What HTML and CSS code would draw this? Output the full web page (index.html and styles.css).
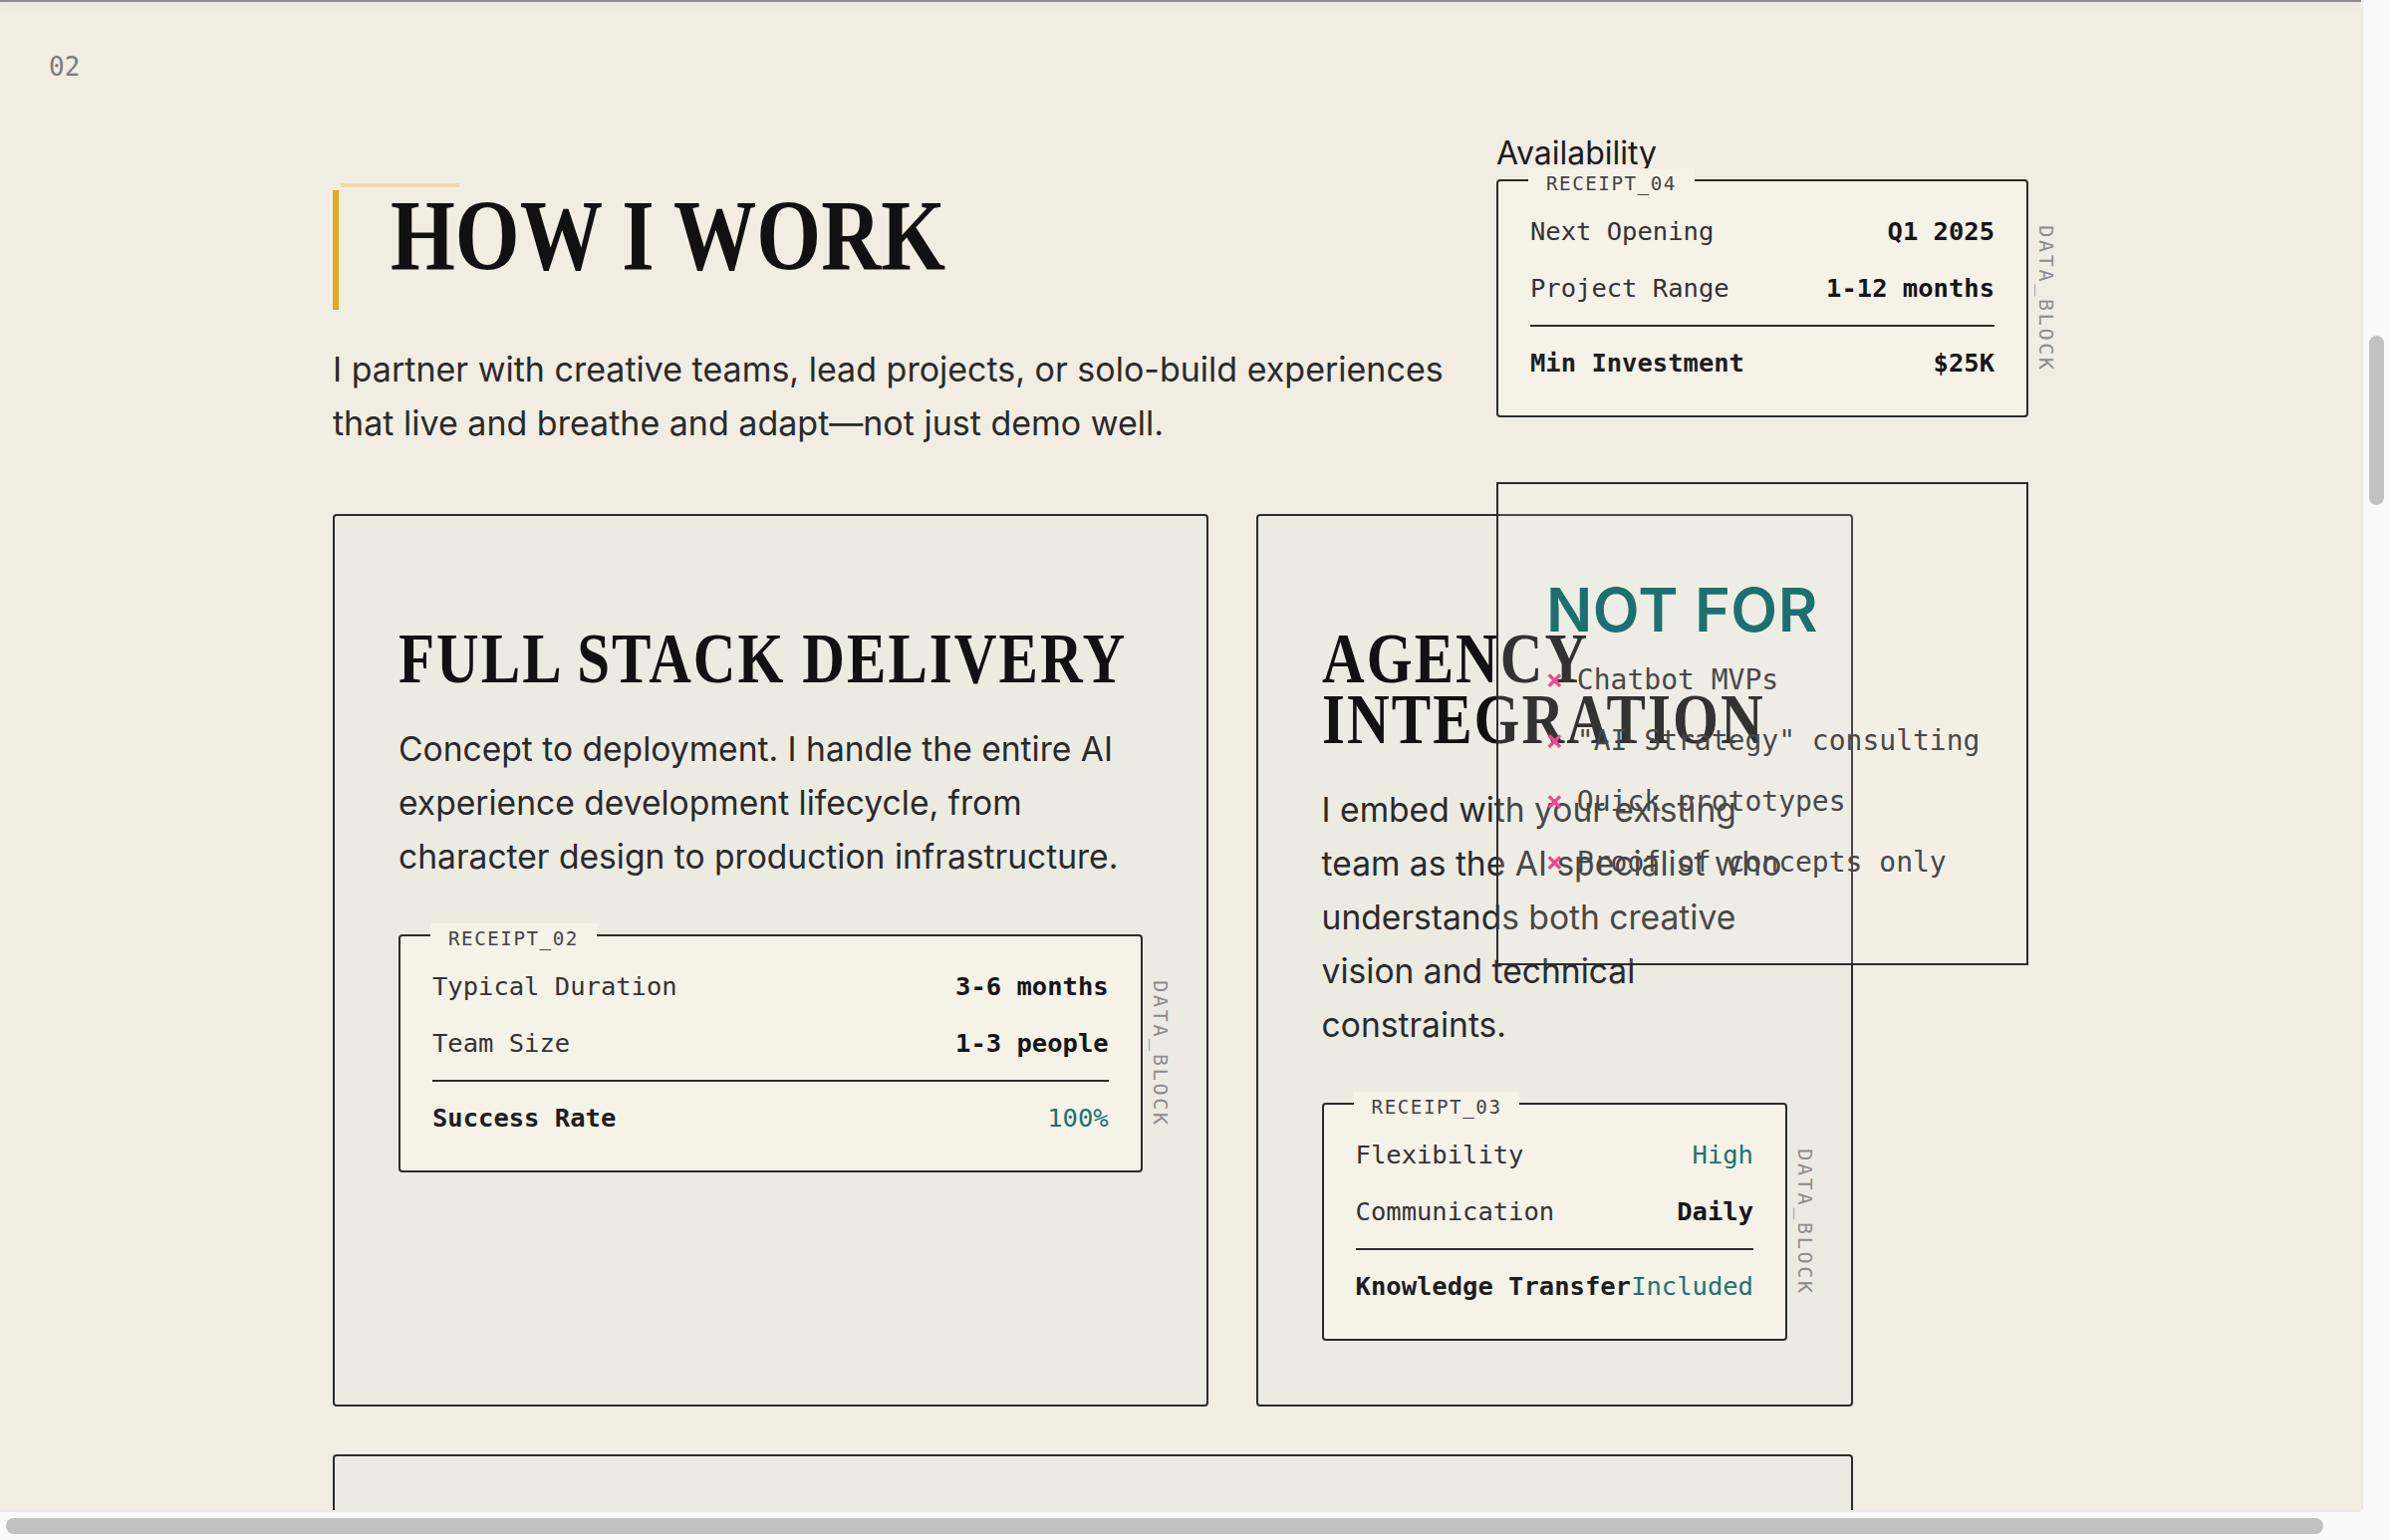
FILE: index.html
```html
<!DOCTYPE html>
<html lang="en">
<head>
<meta charset="utf-8">
<title>How I Work</title>
<link rel="stylesheet" href="styles.css">
</head>
<body>
<div class="topbar" aria-hidden="true"></div>
<main class="page">
  <section class="section section-work">
    <div class="section-num">02</div>
    <div class="work-inner">
      <header class="work-head">
        <h2 class="work-title"><span class="work-title-text">HOW I WORK</span></h2>
        <p class="lead">I partner with creative teams, lead projects, or solo-build experiences that live and breathe and adapt—not just demo well.</p>
      </header>

      <div class="cards">
        <article class="card">
          <h3 class="card-title">FULL STACK DELIVERY</h3>
          <p class="card-text">Concept to deployment. I handle the entire AI experience development lifecycle, from character design to production infrastructure.</p>
          <div class="receipt">
            <span class="receipt-label">RECEIPT_02</span>
            <div class="receipt-row"><span class="k">Typical Duration</span><span class="v">3-6 months</span></div>
            <div class="receipt-row"><span class="k">Team Size</span><span class="v">1-3 people</span></div>
            <div class="receipt-row receipt-total"><span class="k">Success Rate</span><span class="v accent">100%</span></div>
            <span class="data-block">DATA_BLOCK</span>
          </div>
        </article>

        <article class="card">
          <h3 class="card-title">AGENCY INTEGRATION</h3>
          <p class="card-text">I embed with your existing team as the AI specialist who understands both creative vision and technical constraints.</p>
          <div class="receipt">
            <span class="receipt-label">RECEIPT_03</span>
            <div class="receipt-row"><span class="k">Flexibility</span><span class="v accent">High</span></div>
            <div class="receipt-row"><span class="k">Communication</span><span class="v">Daily</span></div>
            <div class="receipt-row receipt-total"><span class="k">Knowledge Transfer</span><span class="v accent">Included</span></div>
            <span class="data-block">DATA_BLOCK</span>
          </div>
        </article>

        <article class="card card-wide"></article>
      </div>
    </div>

    <aside class="side">
      <div class="side-label">Availability</div>
      <div class="receipt">
        <span class="receipt-label">RECEIPT_04</span>
        <div class="receipt-row"><span class="k">Next Opening</span><span class="v">Q1 2025</span></div>
        <div class="receipt-row"><span class="k">Project Range</span><span class="v">1-12 months</span></div>
        <div class="receipt-row receipt-total"><span class="k">Min Investment</span><span class="v">$25K</span></div>
        <span class="data-block">DATA_BLOCK</span>
      </div>

      <div class="notfor">
        <h3 class="notfor-title">NOT FOR</h3>
        <ul class="notfor-list">
          <li><span class="x">×</span>Chatbot MVPs</li>
          <li><span class="x">×</span>"AI Strategy" consulting</li>
          <li><span class="x">×</span>Quick prototypes</li>
          <li><span class="x">×</span>Proof of concepts only</li>
        </ul>
      </div>
    </aside>
  </section>
</main>

<div class="scrollbar scrollbar-v" aria-hidden="true"><span class="thumb"></span></div>
<div class="scrollbar scrollbar-h" aria-hidden="true"><span class="thumb"></span></div>
<div class="scroll-corner" aria-hidden="true"></div>
</body>
</html>
```

FILE: styles.css
```css
* { box-sizing: border-box; }

html { background: #f1ede2; overflow: hidden; }

body {
  margin: 0;
  font-family: Inter, "Noto Sans", sans-serif;
  color: #1c1c1c;
}

/* window chrome: faux scrollbars and top shadow */
.topbar {
  position: fixed;
  top: 0; left: 0; right: 30px;
  height: 2px;
  background: #8e8e8e;
  box-shadow: 0 2px 12px rgba(0, 0, 0, 0.12);
  z-index: 10;
}

.scrollbar {
  position: fixed;
  background: #fafafa;
  z-index: 20;
}
.scrollbar .thumb {
  position: absolute;
  background: #c1c1c1;
  border-radius: 8px;
}
.scrollbar-v {
  top: 0; right: 0; bottom: 30px;
  width: 30px;
  border-left: 2px solid #ebebeb;
}
.scrollbar-v .thumb { top: 337px; left: 6px; width: 15px; height: 170px; }
.scrollbar-h {
  left: 0; right: 30px; bottom: 0;
  height: 30px;
  border-top: 2px solid #ebebeb;
}
.scrollbar-h .thumb { top: 6px; left: 6px; width: 2326px; height: 16px; }
.scroll-corner {
  position: fixed;
  right: 0; bottom: 0;
  width: 30px; height: 30px;
  background: #fafafa;
  z-index: 20;
}

/* section */
.section-work { position: relative; padding-top: 49px; min-height: 2200px; }

.section-num {
  font-family: "DejaVu Sans Mono", monospace;
  font-size: 26px;
  line-height: 36px;
  color: #7b7b7b;
  padding-left: 49px;
}

.work-inner { margin-left: 334px; width: 1526px; }

.work-head { padding-top: 106px; }

.work-title {
  position: relative;
  margin: 0;
  height: 120px;
  padding: 0 0 28px 52px;
  border-left: 6px solid #e0a91f;
  font-family: "Liberation Serif", serif;
  font-weight: 700;
  font-size: 101px;
  line-height: 92px;
  color: #111;
  white-space: nowrap;
}
.work-title::before {
  content: "";
  position: absolute;
  top: -7px; left: 2px;
  width: 119px; height: 4px;
  background: #efdcab;
}
.work-title-text {
  display: inline-block;
  transform: scaleX(0.825);
  transform-origin: left center;
}

.lead {
  margin: 33px 0 0;
  max-width: 1150px;
  font-size: 34px;
  line-height: 54px;
  color: #2a2a2a;
}

.cards {
  margin-top: 64px;
  display: grid;
  grid-template-columns: minmax(0, 878fr) minmax(0, 599fr);
  gap: 48px;
}

.card {
  border: 2px solid #2b2b2b;
  border-radius: 4px;
  padding: 64px;
  background: rgba(200, 225, 225, 0.1);
}

.card-wide { grid-column: 1 / -1; min-height: 700px; }

.card-title {
  margin: 49px 0 0;
  width: 122%;
  font-family: "Liberation Serif", serif;
  font-weight: 700;
  font-size: 72px;
  line-height: 61px;
  letter-spacing: 2.5px;
  color: #111;
  transform: scaleX(0.82);
  transform-origin: left top;
}

.card-text {
  margin: 33px 0 51px;
  font-size: 33.6px;
  line-height: 54px;
  color: #2a2a2a;
}

.receipt {
  position: relative;
  border: 2px solid #2b2b2b;
  border-radius: 4px;
  background: #f5f2e8;
  padding: 22px 32px 34px;
  font-family: "DejaVu Sans Mono", monospace;
  font-size: 25.5px;
  color: #333;
}

.receipt-label {
  position: absolute;
  top: -13px; left: 30px;
  padding: 0 18px;
  background: #f5f2e8;
  font-size: 19.2px;
  line-height: 32px;
  letter-spacing: 0.08em;
  color: #444;
}

.receipt-row {
  display: flex;
  justify-content: space-between;
  padding: 10px 0;
  line-height: 37px;
  white-space: nowrap;
}
.receipt-row .v { font-weight: 700; color: #161616; }
.receipt-row .v.accent { color: #1d7272; font-weight: 400; }

.receipt-total {
  margin-top: 8px;
  border-top: 2px solid #2b2b2b;
  padding: 18px 0 0;
}
.receipt-total .k { font-weight: 700; color: #1e1e1e; }

.data-block {
  position: absolute;
  left: calc(100% + 10px);
  top: 50%;
  transform: translateY(-50%);
  writing-mode: vertical-rl;
  font-family: "DejaVu Sans Mono", monospace;
  font-size: 20px;
  line-height: 20px;
  letter-spacing: 2.7px;
  color: #8c8c8c;
}

/* side column (overlaps the card grid) */
.side {
  position: absolute;
  z-index: 2;
  top: 135px;
  left: 1502px;
  width: 534px;
}

.side-label {
  font-size: 32px;
  line-height: 38px;
  color: #1a1a1a;
  margin-bottom: 7px;
}

.notfor {
  margin-top: 65px;
  height: 485px;
  border: 2px solid #2b2b2b;
  background: rgba(255, 253, 245, 0.14);
  padding: 90px 48px 0;
}

.notfor-title {
  margin: 0;
  font-family: Inter, sans-serif;
  font-weight: 600;
  font-size: 61px;
  line-height: 73px;
  letter-spacing: 0.5px;
  color: #1d7070;
}

.notfor-list {
  margin: 3px 0 0;
  padding: 0;
  list-style: none;
  font-family: "DejaVu Sans Mono", monospace;
  font-size: 28px;
  line-height: 61px;
  color: #484848;
  white-space: nowrap;
}
.notfor-list li { display: flex; }
.notfor-list .x { color: #ec4a8e; font-weight: 700; margin-right: 14px; }
```
